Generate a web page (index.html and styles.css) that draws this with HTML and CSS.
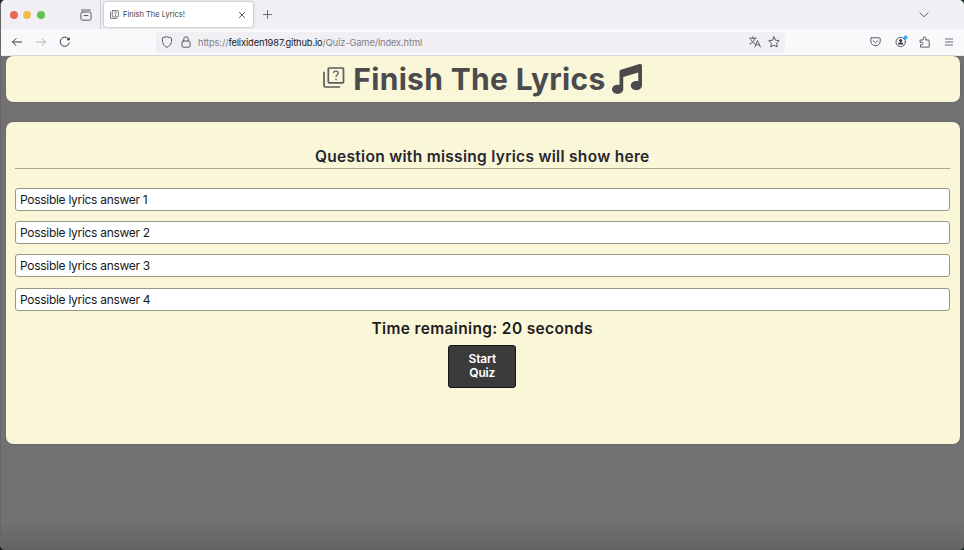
FILE: index.html
```html
<!DOCTYPE html>
<html lang="en">
<head>
<meta charset="utf-8">
<title>Finish The Lyrics!</title>
<link rel="stylesheet" href="styles.css">
</head>
<body>
<div class="window">
  <div class="tabs">
    <div class="lights"><i class="red"></i><i class="yellow"></i><i class="green"></i></div>
    <svg class="icon recent" viewBox="0 0 12 12"><rect x=".9" y="3" width="10.2" height="8.2" rx="1.6"/><path d="M1.5 1h9M4.2 6.5h3.6"/></svg>
    <div class="divider"></div>
    <div class="tab">
      <svg class="icon favicon" viewBox="0 0 10 10"><rect x="2.5" y=".6" width="6.8" height="7" rx=".5"/><path d="M.6 2.3v7.1h7.1M4.9 3c0-1.5 2.1-1.3 2.1 0 0 .8-1.1.8-1.1 1.7M5.9 5.7v.5"/></svg>
      <span class="tab-title">Finish The Lyrics!</span>
      <svg class="icon close" viewBox="0 0 6 6"><path d="M.4.4l5.2 5.2M5.6.4L.4 5.6"/></svg>
    </div>
    <svg class="icon plus" viewBox="0 0 9 9"><path d="M4.5.5v8M.5 4.5h8"/></svg>
    <svg class="icon chevron" viewBox="0 0 10 6"><path d="M1 .8l4 4 4-4"/></svg>
  </div>
  <div class="toolbar">
    <svg class="icon dark back" viewBox="0 0 10 8"><path d="M9.7 4H.6M4.1.5L.6 4l3.5 3.5"/></svg>
    <svg class="icon pale forward" viewBox="0 0 10 8"><path d="M.3 4h9.1M5.9.5L9.4 4 5.9 7.5"/></svg>
    <svg class="icon dark reload" viewBox="0 0 12 12"><path d="M10.3 7A4.6 4.6 0 1 1 9.2 2.6l1 1"/><path class="solid" d="M10.7 1v3.2H7.5z"/></svg>
    <div class="address">
      <svg class="icon shield" viewBox="0 0 12 12"><path d="M6 .7l4.5 1.6c.5 4.5-1 7.5-4.5 9-3.500-1.500-5-4.500-4.500-9z"/></svg>
      <svg class="icon lock" viewBox="0 0 10 12"><rect x="1" y="5" width="8" height="6.2" rx="1.2"/><path d="M2.800 5V3a2.200 2.200 0 0 1 4.400 0v2"/></svg>
      <span class="url">https://<b>felixiden1987.github.io</b>/Quiz-Game/index.html</span>
      <svg class="icon translate" viewBox="0 0 12 12"><path d="M.6 2.200h6.600M3.900.7v1.500M6 2.200C5.500 4.800 3.500 6.800.8 8M2 3.700c.7 1.900 2 3.200 3.700 3.800M5.800 11l2.700-6.500 2.900 6.500M6.700 8.800h3.700"/></svg>
      <svg class="icon star" viewBox="0 0 12 12"><path d="M6 .9l1.600 3.300 3.600.5-2.600 2.500.6 3.700L6 9.200l-3.200 1.700.6-3.700L.8 4.700l3.600-.5z"/></svg>
    </div>
    <svg class="icon pocket" viewBox="0 0 11 10"><path d="M1.500.8h8q.7 0 .7.700v2.700c0 6-9.400 6-9.400 0V1.500q0-.700.7-.700zM3.200 3.700l2.300 2.100 2.300-2.100"/></svg>
    <svg class="icon account" viewBox="0 0 13 13"><circle cx="5.700" cy="7" r="4.700"/><circle class="solid" cx="5.700" cy="5.400" r="1.500"/><path class="solid" d="M2.900 9.500c.2-3 5.400-3 5.600 0z"/><circle class="notice" cx="10.600" cy="2.600" r="2"/></svg>
    <svg class="icon puzzle" viewBox="0 0 12 12"><path d="M1.500 4h2.700V2.300a1.300 1.300 0 0 1 2.600 0V4h2.700q.7 0 .7.700v6.400H1.500V8.800h1.300a1.200 1.200 0 0 0 0-2.400H1.500z"/></svg>
    <svg class="icon menu" viewBox="0 0 8 8"><path d="M0 1h8M0 4h8M0 7h8"/></svg>
  </div>
  <div class="page">
    <header class="card banner">
      <svg class="quiz" viewBox="0 0 22 22"><rect x="5.300" y="1" width="15.200" height="14.800" rx="1"/><path d="M1 4.800v14q0 1.200 1.200 1.200H17"/><path class="mark" d="M10.600 6c0-2.700 4.600-2.500 4.600.1 0 1.800-2.200 1.800-2.200 3.900M13 11.600v1.600"/></svg>
      <h1>Finish The Lyrics</h1>
      <svg class="music" viewBox="0 0 512 512"><path d="M499.100 6.300c8.100 6 12.900 15.600 12.900 25.700v336c0 44.200-43 80-96 80s-96-35.800-96-80 43-80 96-80c11.200 0 22 1.600 32 4.600V147L192 223.800V432c0 44.200-43 80-96 80S0 476.200 0 432s43-80 96-80c11.200 0 22 1.600 32 4.600V128c0-14.100 9.300-26.600 22.800-30.700l320-96c9.700-2.900 20.200-1.100 28.300 5z"/></svg>
    </header>
    <main class="card quiz-box">
      <h2 class="question">Question with missing lyrics will show here</h2>
      <div class="answers">
        <div class="answer">Possible lyrics answer 1</div>
        <div class="answer">Possible lyrics answer 2</div>
        <div class="answer">Possible lyrics answer 3</div>
        <div class="answer">Possible lyrics answer 4</div>
      </div>
      <h2 class="timer">Time remaining: 20 seconds</h2>
      <button class="start">Start Quiz</button>
    </main>
  </div>
</div>
</body>
</html>
```
FILE: styles.css
```css
* { box-sizing: border-box; }
body { margin: 0; background: #17211c; font-family: Inter, "Liberation Sans", sans-serif; }
.window { height: 550px; display: flex; flex-direction: column; overflow: hidden; border-left: 1px solid #666; border-radius: 5px; background: #717171; }
.tabs { height: 29px; flex: none; display: flex; align-items: center; background: #f0eff4; padding-left: 8.500px; }
.lights { display: flex; gap: 5.500px; }
.lights i { width: 8px; height: 8px; border-radius: 50%; }
.red { background: #ed6559; }
.yellow { background: #f3bd4e; }
.green { background: #5dc454; }
.icon { flex: none; fill: none; stroke: #5b5b66; stroke-width: 1; stroke-linecap: round; stroke-linejoin: round; }
.dark { stroke: #3a3a43; }
.pale { stroke: #b4b3b9; }
.icon .solid { fill: #34343e; stroke: none; }
.icon .notice { fill: #35adf2; stroke: none; }
.recent { width: 12px; height: 12px; margin-left: 35px; }
.divider { width: 1px; height: 29px; margin-left: 8.500px; background: #cfced4; }
.tab { width: 149px; height: 25px; margin-left: 3px; padding: 0 8px 0 6px; display: flex; align-items: center; background: #fff; border-radius: 3px; box-shadow: 0 0 3px #0005; }
.favicon { width: 9px; height: 9px; stroke-width: .9; }
.tab-title { margin-left: 4px; font-size: 7.500px; color: #3b3b44; }
.close { width: 6px; height: 6px; margin-left: auto; stroke: #33333b; stroke-width: .8; }
.plus { width: 9px; height: 9px; margin-left: 10px; stroke-width: .9; }
.chevron { width: 10px; height: 6px; margin: 0 35px 0 auto; }
.toolbar { height: 27px; flex: none; display: flex; align-items: center; background: #f9f9fb; border-bottom: 1px solid #e8e8e5; padding: 0 11px; }
.back, .forward { width: 10px; height: 8px; }
.forward { margin-left: 14px; }
.reload { width: 12px; height: 12px; margin-left: 13px; }
.address { width: 629px; height: 21px; margin-left: 85px; padding: 0 5px; display: flex; align-items: center; background: #f0eff4; border-radius: 3px; }
.shield { width: 12px; height: 12px; }
.lock { width: 10px; height: 12px; margin-left: 8px; }
.url { margin-left: 7px; font-size: 9.300px; letter-spacing: -.12px; color: #808087; white-space: nowrap; }
.url b { font-weight: 400; color: #17171d; }
.translate { width: 12px; height: 12px; margin-left: auto; }
.star { width: 12px; height: 12px; margin-left: 7px; }
.pocket { width: 11px; height: 10px; margin-left: auto; }
.account { width: 13px; height: 13px; margin: -2px 0 0 14px; }
.puzzle { width: 12px; height: 12px; margin-left: 11px; }
.menu { width: 8px; height: 8px; margin: 0 0 0 14px; stroke-width: .9; }
.page { flex: 1; padding: 0 4.500px 0 5px; background: linear-gradient(to bottom, transparent 466px, #626262 494px); }
.card { background: #faf6d8; border-radius: 7px; box-shadow: 0 0 1px #333; }
.banner { height: 46px; display: flex; align-items: center; justify-content: center; color: #4b4b4d; }
.quiz { width: 22px; height: 22px; margin: -3px 8px 0 0; fill: none; stroke: #5c5b60; stroke-width: 1.700; }
.mark { stroke-width: 1.300; }
h1 { margin: 0; width: 252px; font-size: 30px; line-height: 46px; font-weight: 700; letter-spacing: .33px; white-space: nowrap; }
.music { width: 30px; height: 30px; margin-left: 7px; fill: #4b4b4d; }
.quiz-box { height: 322px; margin-top: 20px; padding: 23px 10px 0 9px; }
h2 { margin: 0; text-align: center; color: #26262e; font-size: 15.500px; font-weight: 600; letter-spacing: .3px; white-space: nowrap; }
.question { height: 24px; line-height: 23px; border-bottom: 1px solid #aaa792; }
.answers { display: grid; gap: 10.400px; margin-top: 18.600px; }
.answer { height: 23px; padding: 0 4px; border: 1px solid #999887; border-radius: 3px; background: #fff; color: #17171a; font-size: 12px; line-height: 21px; letter-spacing: -.29px; }
.timer { margin-top: 5px; line-height: 25px; letter-spacing: .35px; color: #1d1d22; }
.start { display: block; width: 68px; height: 43px; margin: 4px auto 0; padding: 0 15px; border: 1px solid #141419; border-radius: 3px; background: #3b3b3b; color: #fff; font: 600 12px/14.500px Inter, sans-serif; letter-spacing: -.15px; }
```
